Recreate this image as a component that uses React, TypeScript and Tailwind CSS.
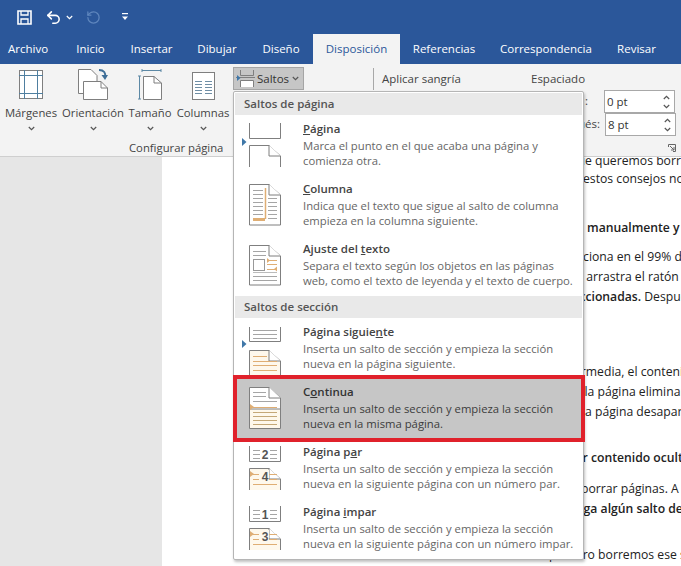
import { ReactNode } from "react";
import { RotateCcw, Undo2 } from "lucide-react";

const line = "#7f7f7f";
const orange = "#dfae74";
const cream = "#fef8ec";

function Chevron({ color = "#555" }: { color?: string }) {
  return (
    <svg width="7" height="5" viewBox="0 0 7 5" fill="none" stroke={color} strokeWidth="1.2">
      <path d="M0.8 1 L3.5 3.7 L6.2 1" />
    </svg>
  );
}

function Lines({ x1, x2, ys, color = "#a5a5a5" }: { x1: number; x2: number; ys: number[]; color?: string }) {
  return (
    <>
      {ys.map((y) => (
        <line key={y} x1={x1} x2={x2} y1={y + 0.5} y2={y + 0.5} stroke={color} />
      ))}
    </>
  );
}

// sheet with a folded corner, open at the bottom when the sheet is cut
function Sheet({ top, bottom, fill = "#fff", open = false }: { top: number; bottom: number; fill?: string; open?: boolean }) {
  return (
    <>
      <path
        d={`M15.5 ${bottom} V${top + 0.5} H35 L46.5 ${top + 11} V${bottom} ${open ? "" : "Z"}`}
        fill={fill}
        stroke={line}
      />
      <path d={`M35 ${top} V${top + 11} H46.5`} fill="#fff" stroke={line} />
    </>
  );
}

function Cut({ top, bottom }: { top: number; bottom: number }) {
  return <path d={`M15.5 ${top} V${bottom - 0.5} H46.5 V${top}`} fill="#fff" stroke={line} />;
}

function Arrow({ y }: { y: number }) {
  return <path d={`M8 ${y - 4} L12.5 ${y} L8 ${y + 4} Z`} fill="#3f77a8" />;
}

function RowIcon({ children }: { children: ReactNode }) {
  return (
    <svg width="69" height="60" viewBox="0 0 69 60" className="shrink-0 overflow-visible">
      {children}
    </svg>
  );
}

function Digit({ y, n }: { y: number; n: string }) {
  return (
    <text x="31" y={y} textAnchor="middle" fontSize="12" fontWeight="700" fill="#555" fontFamily="Liberation Sans, sans-serif">
      {n}
    </text>
  );
}

const icons = {
  pagina: (
    <RowIcon>
      <Cut top={5} bottom={21} />
      <Sheet top={27} bottom={49} open />
      <Arrow y={24} />
    </RowIcon>
  ),
  columna: (
    <RowIcon>
      <Sheet top={6} bottom={47} />
      <Lines x1={19} x2={29} ys={[12, 16, 20, 24, 28, 32, 36, 40]} />
      <Lines x1={34} x2={43} ys={[20, 24, 28, 32, 36, 40]} />
      <path d="M31.5 10 V41" stroke={orange} strokeWidth="1.5" />
      <rect x="19" y="40" width="12" height="3" fill={orange} />
    </RowIcon>
  ),
  ajuste: (
    <RowIcon>
      <Sheet top={7} bottom={47} />
      <Lines x1={19} x2={32} ys={[13, 17]} />
      <Lines x1={19} x2={43} ys={[38, 42]} />
      <rect x="19.5" y="21.5" width="11" height="11" fill="#fff" stroke="#999" />
      <Lines x1={33} x2={43} ys={[22, 26, 31]} color={orange} />
      <path d="M33 20 L36 22.5 L33 25 Z M43 28.5 L40 31 L43 33.5 Z" fill={orange} />
      <Lines x1={19} x2={43} ys={[34]} color="#bbb" />
    </RowIcon>
  ),
  siguiente: (
    <RowIcon>
      <Cut top={9} bottom={24} />
      <Lines x1={19} x2={43} ys={[12, 16, 20]} />
      <Sheet top={32} bottom={60} fill={cream} open />
      <Lines x1={19} x2={33} ys={[38]} color={orange} />
      <Lines x1={19} x2={43} ys={[43, 47, 52]} color={orange} />
      <Arrow y={26} />
    </RowIcon>
  ),
  continua: (
    <RowIcon>
      <path d="M15.5 31 V9.5 H35 L46.5 20 V31" fill="#fff" stroke={line} />
      <path d="M15.5 31 V50.5 H46.5 V31 Z" fill={cream} stroke={line} />
      <path d="M35 9 V20 H46.5" fill="#fff" stroke={line} />
      <Lines x1={19} x2={32} ys={[14, 18]} />
      <Lines x1={19} x2={43} ys={[23]} />
      <Lines x1={19} x2={43} ys={[29]} color={orange} />
      <path d="M16 26 L20 29 L16 32 Z" fill={orange} />
      <Lines x1={19} x2={43} ys={[34, 38, 42, 46]} color="#c4a878" />
    </RowIcon>
  ),
  par: (
    <RowIcon>
      <Cut top={8} bottom={24} />
      <Lines x1={19} x2={43} ys={[12, 16, 20]} />
      <rect x="26" y="9" width="10" height="14" fill="#fff" />
      <Digit y={21} n="2" />
      <Sheet top={30} bottom={52} fill={cream} open />
      <Lines x1={19} x2={43} ys={[36, 41, 46]} color={orange} />
      <path d="M16 33 L20 36 L16 39 Z" fill={orange} />
      <rect x="25" y="32" width="10" height="11" fill={cream} />
      <Digit y={43} n="4" />
    </RowIcon>
  ),
  impar: (
    <RowIcon>
      <Cut top={8} bottom={24} />
      <Lines x1={19} x2={43} ys={[12, 16, 20]} />
      <rect x="26" y="9" width="10" height="14" fill="#fff" />
      <Digit y={21} n="1" />
      <Sheet top={30} bottom={52} fill={cream} open />
      <Lines x1={19} x2={43} ys={[36, 41, 46]} color={orange} />
      <path d="M16 33 L20 36 L16 39 Z" fill={orange} />
      <rect x="25" y="32" width="10" height="11" fill={cream} />
      <Digit y={43} n="3" />
    </RowIcon>
  ),
};

function Item({ icon, title, lines, active = false, pad = "pt-[2px]" }: { icon: ReactNode; title: ReactNode; lines: string[]; active?: boolean; pad?: string }) {
  return (
    <div className={`flex h-[60px] ${active ? "bg-[#c6c6c6]" : ""}`}>
      {icon}
      <div className={pad}>
        <div className={`mb-px text-[11.5px] leading-[17px] font-semibold ${active ? "text-[#333]" : "text-[#444]"}`}>{title}</div>
        {lines.map((l) => (
          <div key={l} className={`text-[11.3px] leading-[15px] whitespace-nowrap ${active ? "text-[#3c3c3c]" : "text-[#666]"}`}>
            {l}
          </div>
        ))}
      </div>
    </div>
  );
}

function SectionHead({ children }: { children: ReactNode }) {
  return <div className="mx-px h-[22px] bg-[#e9e9e9] pl-[9px] text-[11.5px] leading-[22px] font-semibold text-[#555]">{children}</div>;
}

function BreaksMenu() {
  return (
    <div className="absolute left-[233px] top-[91px] h-[469px] w-[351px] rounded-[2px] border border-[#b5b5b5] bg-white pt-px shadow-[1px_2px_3px_rgba(0,0,0,0.25)]">
      <SectionHead>Saltos de página</SectionHead>
      <div className="mt-[3px] h-[178px]">
        <Item
          icon={icons.pagina}
          title={<><u>P</u>ágina</>}
          lines={["Marca el punto en el que acaba una página y", "comienza otra."]}
        />
        <Item
          icon={icons.columna}
          title={<><u>C</u>olumna</>}
          lines={["Indica que el texto que sigue al salto de columna", "empieza en la columna siguiente."]}
        />
        <Item
          icon={icons.ajuste}
          title={<>Ajuste del <u>t</u>exto</>}
          lines={["Separa el texto según los objetos en las páginas", "web, como el texto de leyenda y el texto de cuerpo."]}
        />
      </div>
      <SectionHead>Saltos de sección</SectionHead>
      <Item
        pad="pt-[5px]"
        icon={icons.siguiente}
        title={<>Página siguie<u>n</u>te</>}
        lines={["Inserta un salto de sección y empieza la sección", "nueva en la página siguiente."]}
      />
      <Item
        pad="pt-[5px]"
        active
        icon={icons.continua}
        title={<>C<u>o</u>ntinua</>}
        lines={["Inserta un salto de sección y empieza la sección", "nueva en la misma página."]}
      />
      <Item
        pad="pt-[5px]"
        icon={icons.par}
        title={<>Página p<u>a</u>r</>}
        lines={["Inserta un salto de sección y empieza la sección", "nueva en la siguiente página con un número par."]}
      />
      <Item
        pad="pt-[5px]"
        icon={icons.impar}
        title={<>Página <u>i</u>mpar</>}
        lines={["Inserta un salto de sección y empieza la sección", "nueva en la siguiente página con un número impar."]}
      />
      <div className="absolute left-[-1px] top-[283px] h-[67px] w-[352px] border-4 border-[#e0212b]" />
    </div>
  );
}

function LargeButton({ icon, label, width }: { icon: ReactNode; label: string; width: string }) {
  return (
    <div className={`flex flex-col items-center ${width}`}>
      <div className="flex h-[36px] items-end">{icon}</div>
      <div className="mt-[5px] text-[11.3px] leading-[16px] whitespace-nowrap text-[#444]">{label}</div>
      <div className="mt-[5px] h-[5px]">
        <Chevron />
      </div>
    </div>
  );
}

const ribbonIcons = {
  margins: (
    <svg width="24" height="30" viewBox="0 0 24 30" fill="none">
      <rect x="0.5" y="0.5" width="23" height="28" fill="#fff" stroke={line} />
      <path d="M5.5 0 V29 M18.5 0 V29 M0 5.5 H24 M0 23.5 H24" stroke="#4f7fa0" />
    </svg>
  ),
  orientation: (
    <svg width="30" height="31" viewBox="0 0 30 31" fill="none">
      <path d="M0.5 24.5 V0.5 H13 L19 6.5 V24.5 Z" fill="#fff" stroke={line} />
      <path d="M5.5 30.5 V12.5 H23 L29.5 19 V30.5 Z" fill="#fff" stroke={line} />
      <path d="M23 12.5 V19 H29.5" stroke={line} />
      <path d="M21 1 C26 1 28 4 27 8" stroke="#3f6f98" strokeWidth="2" />
      <path d="M23.5 6 L27 11 L30 6 Z" fill="#3f6f98" />
    </svg>
  ),
  size: (
    <svg width="25" height="31" viewBox="0 0 25 31" fill="none">
      <path d="M4 1.5 H23 M4 0 V3 M23 0 V3 M1.5 7 V30 M0 7 H3 M0 30 H3" stroke="#5c88a5" />
      <path d="M5.5 30.5 V7.5 H16 L23.5 14 V30.5 Z" fill="#fff" stroke={line} />
      <path d="M16 7.5 V14 H23.5" stroke={line} />
    </svg>
  ),
  columns: (
    <svg width="23" height="28" viewBox="0 0 23 28" fill="none">
      <rect x="0.5" y="0.5" width="22" height="27" fill="#fff" stroke={line} />
      <path d="M3 9.5 H10 M13 9.5 H20 M3 12.5 H10 M13 12.5 H20 M3 15.5 H10 M13 15.5 H20 M3 18.5 H10 M13 18.5 H20 M3 21.5 H10 M13 21.5 H20" stroke="#6f8ea5" />
    </svg>
  ),
};

function Spinner({ value, className }: { value: string; className: string }) {
  return (
    <div className={`flex h-[23px] w-[71px] items-center justify-between border border-[#a8a8a8] bg-white pl-[2px] pr-[4px] text-[11.5px] text-[#333] ${className}`}>
      <span>{value}</span>
      <div className="flex flex-col gap-[4px]">
        <span className="rotate-180 leading-[0]"><Chevron /></span>
        <span className="leading-[0]"><Chevron /></span>
      </div>
    </div>
  );
}

const tabs = [
  { label: "Inicio", cls: "w-[55px]" },
  { label: "Insertar", cls: "w-[67px]" },
  { label: "Dibujar", cls: "w-[64px]" },
  { label: "Diseño", cls: "w-[64px]" },
];

const tabsAfter = [
  { label: "Referencias", cls: "w-[88px]" },
  { label: "Correspondencia", cls: "w-[116px]" },
  { label: "Revisar", cls: "w-[65px]" },
];

const docLines = [
  { text: "que queremos borrar", cls: "-mt-[6px] pl-[570px]" },
  { text: "estos consejos no", cls: "mt-[-2px] pl-[583px]" },
  { text: "manualmente y", cls: "mt-[29px] pl-[587px] font-semibold" },
  { text: "funciona en el 99% de", cls: "mt-[9px] pl-[564px]" },
  { text: "y arrastra el ratón", cls: "pl-[577px]" },
  { text: "seleccionadas. Después", cls: "pl-[556px]", bold: "seleccionadas." },
  { text: "hipermedia, el contenido", cls: "mt-[55px] pl-[556px]" },
  { text: "de la página eliminar", cls: "pl-[567px]" },
  { text: "la página desaparece", cls: "pl-[582px]" },
  { text: "ver contenido oculto", cls: "mt-[26px] pl-[569px] font-semibold" },
  { text: "borrar páginas. A", cls: "mt-[11px] pl-[581px]" },
  { text: "tenga algún salto de", cls: "pl-[564px] font-semibold" },
  { text: "primero borremos ese salto", cls: "mt-[26px] pl-[549px]" },
];

export default function App() {
  return (
    <div className="relative h-[566px] w-[681px] overflow-hidden bg-[#e6e6e6] font-['Open_Sans',sans-serif]">
      {/* quick access */}
      <div className="flex h-[34px] items-center bg-[#2b579a] pl-[17px] text-white">
        <svg width="15" height="15" viewBox="0 0 15 15" fill="none" stroke="#fff" strokeWidth="1.6">
          <path d="M1 1 H14 V14 H1 Z" />
          <path d="M4 1 V5 H11 V1 M4 14 V9 H11 V14" strokeWidth="1.3" />
        </svg>
        <Undo2 size={17} strokeWidth={2.2} className="ml-[13px]" />
        <span className="ml-[4px]"><Chevron color="#fff" /></span>
        <RotateCcw size={15} className="ml-[13px] text-[#5f86bd]" />
        <svg width="7" height="8" viewBox="0 0 7 8" className="ml-[21px]" fill="#fff">
          <rect y="0" width="6" height="1.2" />
          <path d="M0 3.5 H6 L3 7 Z" />
        </svg>
      </div>

      {/* tabs */}
      <div className="flex h-[30px] items-stretch bg-[#2b579a] text-center text-[11.5px] leading-[30px] whitespace-nowrap text-white">
        <div className="w-[63px] pl-[8px] text-left">Archivo</div>
        {tabs.map((t) => (
          <div key={t.label} className={t.cls}>{t.label}</div>
        ))}
        <div className="w-[87px] bg-[#f3f3f3] text-[#2b579a]">Disposición</div>
        {tabsAfter.map((t) => (
          <div key={t.label} className={t.cls}>{t.label}</div>
        ))}
      </div>

      {/* ribbon */}
      <div className="flex h-[93px] border-b border-[#cfcfcf] bg-[#f3f3f3]">
        <div className="flex w-[233px] flex-col pl-[5px]">
          <div className="flex gap-[5px]">
            <LargeButton icon={ribbonIcons.margins} label="Márgenes" width="w-[52px]" />
            <LargeButton icon={ribbonIcons.orientation} label="Orientación" width="w-[62px]" />
            <LargeButton icon={ribbonIcons.size} label="Tamaño" width="w-[42px]" />
            <LargeButton icon={ribbonIcons.columns} label="Columnas" width="w-[54px]" />
          </div>
          <div className="mt-[9px] pl-[124px] text-[11.3px] leading-[16px] whitespace-nowrap text-[#444]">Configurar página</div>
        </div>
        <div className="pt-[3px]">
          <div className="flex h-[23px] w-[71px] items-center border border-[#a5a5a5] bg-[#c6c6c6] pl-[2px] text-[11.5px] text-[#333]">
            <svg width="20" height="18" viewBox="0 0 20 18" fill="none">
              <path d="M4.5 0 V5.5 H17.5 V0 M0 7.5 H19" stroke={line} />
              <path d="M4.5 17 V10.5 H17.5 V17" fill="#fff" stroke={line} />
              <path d="M1 5 L4.5 8 L1 11 Z" fill="#3f77a8" />
            </svg>
            <span className="ml-[1px]">Saltos</span>
            <span className="ml-[3px]"><Chevron /></span>
          </div>
        </div>
        <div className="ml-[69px] mt-[4px] h-[22px] w-px bg-[#a8a8a8]" />
        <div className="relative flex-1 pt-[6px] text-[11.5px] leading-[18px] text-[#444]">
          <div className="flex pl-[8px]">
            <span className="w-[149px]">Aplicar sangría</span>
            <span>Espaciado</span>
          </div>
          <div className="mt-[2px] flex flex-col items-end pr-[5px]">
            <Spinner value="0 pt" className="mr-px" />
            <Spinner value="8 pt" className="" />
          </div>
          <span className="absolute left-[211px] top-[28px]">:</span>
          <span className="absolute left-[204px] top-[51px]">ués:</span>
          <svg width="8" height="8" viewBox="0 0 8 8" fill="none" stroke="#666" className="absolute bottom-[4px] right-[5px]">
            <path d="M0.5 3 V0.5 H7.5 V7.5 H5 M2 2 L6 6 M3 6 H6 V3" />
          </svg>
        </div>
      </div>

      {/* document */}
      <div className="ml-[162px] h-[409px] overflow-hidden bg-white">
        <div className="-ml-[162px] text-[12.2px] leading-[20px] text-[#222]">
          {docLines.map((l) => (
            <div key={l.text} className={`whitespace-nowrap ${l.cls}`}>
              {l.bold ? <><span className="font-semibold">{l.bold}</span>{l.text.slice(l.bold.length)}</> : l.text}
            </div>
          ))}
        </div>
      </div>

      <BreaksMenu />
    </div>
  );
}
